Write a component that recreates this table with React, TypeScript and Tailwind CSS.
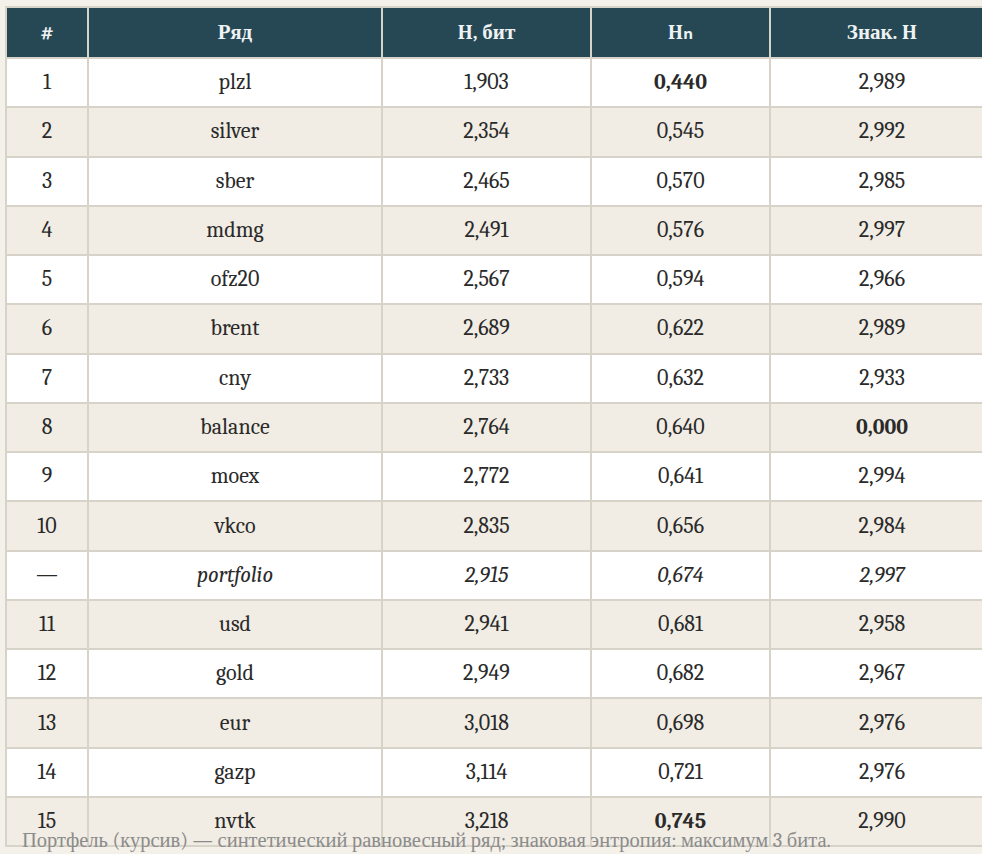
import React from "react";

type Row = {
  n: string;
  name: string;
  h: string;
  hn: string;
  sign: string;
  boldHn?: boolean;
  boldSign?: boolean;
  italic?: boolean;
};

const rows: Row[] = [
  { n: "1", name: "plzl", h: "1,903", hn: "0,440", sign: "2,989", boldHn: true },
  { n: "2", name: "silver", h: "2,354", hn: "0,545", sign: "2,992" },
  { n: "3", name: "sber", h: "2,465", hn: "0,570", sign: "2,985" },
  { n: "4", name: "mdmg", h: "2,491", hn: "0,576", sign: "2,997" },
  { n: "5", name: "ofz20", h: "2,567", hn: "0,594", sign: "2,966" },
  { n: "6", name: "brent", h: "2,689", hn: "0,622", sign: "2,989" },
  { n: "7", name: "cny", h: "2,733", hn: "0,632", sign: "2,933" },
  { n: "8", name: "balance", h: "2,764", hn: "0,640", sign: "0,000", boldSign: true },
  { n: "9", name: "moex", h: "2,772", hn: "0,641", sign: "2,994" },
  { n: "10", name: "vkco", h: "2,835", hn: "0,656", sign: "2,984" },
  { n: "—", name: "portfolio", h: "2,915", hn: "0,674", sign: "2,997", italic: true },
  { n: "11", name: "usd", h: "2,941", hn: "0,681", sign: "2,958" },
  { n: "12", name: "gold", h: "2,949", hn: "0,682", sign: "2,967" },
  { n: "13", name: "eur", h: "3,018", hn: "0,698", sign: "2,976" },
  { n: "14", name: "gazp", h: "3,114", hn: "0,721", sign: "2,976" },
  { n: "15", name: "nvtk", h: "3,218", hn: "0,745", sign: "2,990", boldHn: true },
];

// Liberation Serif comes in through the "Times New Roman" alias of the default serif stack
function Cell({ children, bold, italic }: { children: React.ReactNode; bold?: boolean; italic?: boolean }) {
  return (
    <td className={`h-[47.27px] p-0 font-serif ${italic ? "italic" : ""} ${bold ? "font-bold" : ""}`}>
      {children}
    </td>
  );
}

function Head({ children }: { children: React.ReactNode }) {
  return <th className="h-[49px] p-0 font-serif">{children}</th>;
}

export default function App() {
  return (
    <div className="relative h-[854px] overflow-hidden bg-[#f4f1ea] pl-[5px] pt-[6px] font-serif">
      <table className="w-[990px] table-fixed border-separate border-spacing-[2px] bg-[#d7d3c9] text-center font-serif">
        <colgroup>
          <col className="w-[80px]" />
          <col className="w-[292px]" />
          <col className="w-[207px]" />
          <col className="w-[177px]" />
          <col className="w-[222px]" />
        </colgroup>
        <thead>
          <tr className="bg-[#264854] text-[21px] font-bold text-[#eef2f2]">
            <Head>#</Head>
            <Head>Ряд</Head>
            <Head>H, бит</Head>
            <Head>
              H<span className="font-sans text-[15px]">n</span>
            </Head>
            <Head>Знак. H</Head>
          </tr>
        </thead>
        <tbody className="text-[22px] text-[#2a2a2a]">
          {rows.map((r, i) => (
            <tr key={r.n + r.name} className={i % 2 === 0 ? "bg-white" : "bg-[#f1ede4]"}>
              <Cell>{r.n}</Cell>
              <Cell italic={r.italic}>{r.name}</Cell>
              <Cell italic={r.italic}>{r.h}</Cell>
              <Cell italic={r.italic} bold={r.boldHn}>{r.hn}</Cell>
              <Cell italic={r.italic} bold={r.boldSign}>{r.sign}</Cell>
            </tr>
          ))}
        </tbody>
      </table>
      <p className="absolute left-[22px] top-[827px] whitespace-nowrap font-serif text-[20.5px] leading-[28px] text-[#8b8b8b]">
        Портфель (курсив) — синтетический равновесный ряд; знаковая энтропия: максимум 3 бита.
      </p>
    </div>
  );
}
